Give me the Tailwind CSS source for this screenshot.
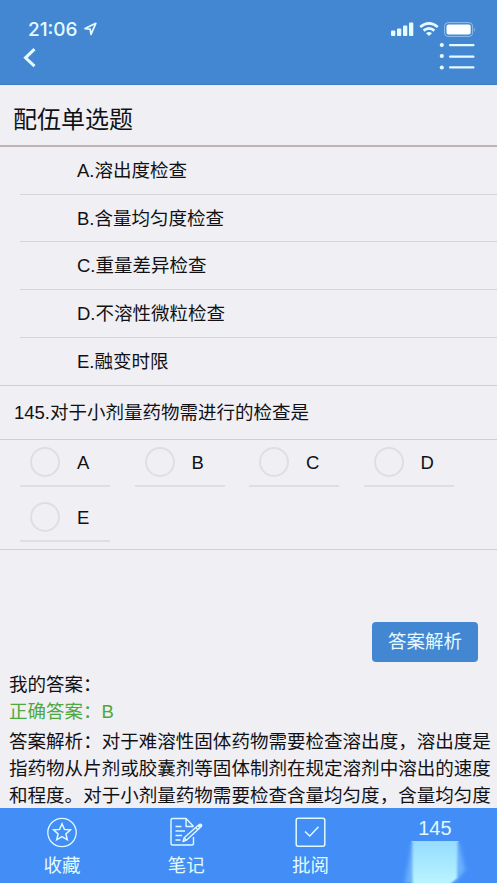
<!DOCTYPE html>
<html lang="zh-CN">
<head>
<meta charset="utf-8">
<title>配伍单选题</title>
<script src="https://cdn.jsdelivr.net/npm/@tailwindcss/browser@4"></script>
</head>
<body class="w-[497px] h-[883px] overflow-hidden bg-[#efeff4] text-[#111114] font-['Liberation_Sans','Noto_Sans_CJK_SC',sans-serif] text-[18.5px] leading-[27px]">
<div class="flex flex-col h-[883px]">
  <header class="h-[85px] shrink-0 bg-[#4387d3] text-[#e6fbff] border-b border-[#3b7bc6]">
    <div class="flex justify-between pt-[18px] pl-[28px] pr-[21px] h-[40px]">
      <div class="flex items-center gap-[5px] h-[22px]">
        <span class="font-['Inter','Liberation_Sans',sans-serif] text-[19px] font-medium w-[51px] whitespace-nowrap">21:06</span>
        <svg width="13" height="14" viewBox="0 0 13 14" fill="none" stroke="currentColor" stroke-width="1.7" stroke-linejoin="round"><path d="M1 6.600 11.800 1.300 7 12.400 6.200 7.200Z"/></svg>
      </div>
      <div class="flex items-center h-[22px]">
        <svg width="23" height="14" viewBox="0 0 23 14" fill="currentColor"><rect x="0" y="8.500" width="4.300" height="5.500" rx="1"/><rect x="6" y="6.500" width="4.300" height="7.500" rx="1"/><rect x="12" y="3.500" width="4.300" height="10.500" rx="1"/><rect x="18" y="0.500" width="4.300" height="13.500" rx="1"/></svg>
        <svg class="ml-[5px]" width="20" height="14" viewBox="0 0 20 14" fill="none" stroke="currentColor" stroke-width="2.700"><path d="M1.200 5Q10-2.200 18.800 5"/><path d="M4.600 8.600Q10 4.200 15.400 8.600"/><path d="M7 11.200Q10 8.800 13 11.200L10 14Z" fill="currentColor" stroke="none"/></svg>
        <svg class="ml-[5px]" width="32" height="15" viewBox="0 0 32 15"><rect x="0.600" y="0.600" width="28" height="13.800" rx="3.500" fill="none" stroke="#8fbfea"/><rect x="2.500" y="2.500" width="24.200" height="10" rx="2" fill="#fff"/><path d="M30.200 5.200Q32 7.500 30.200 9.800Z" fill="#8fbfea"/></svg>
      </div>
    </div>
    <div class="flex justify-between pl-[23px] pr-[22px]">
      <svg class="mt-[8px]" width="14" height="20" viewBox="0 0 14 20" fill="none" stroke="currentColor" stroke-width="3"><path d="M11.500 1.200 2.500 9.800 11.500 18.200"/></svg>
      <svg class="mt-[2px]" width="36" height="30" viewBox="0 0 36 30" fill="currentColor"><circle cx="2.800" cy="3" r="2.100"/><circle cx="2.800" cy="14" r="2.100"/><circle cx="2.800" cy="25.500" r="2.100"/><rect x="10" y="2" width="25.500" height="2.300" rx="1"/><rect x="10" y="13.500" width="25.500" height="2.300" rx="1"/><rect x="10" y="24.300" width="25.500" height="2.300" rx="1"/></svg>
    </div>
  </header>
  <main class="flex-1 min-h-0 overflow-hidden">
    <h1 class="h-[62px] border-b-2 border-[#bdb5b3] pl-[13px] pt-[17px] text-[24px] leading-[36px]">配伍单选题</h1>
    <ul class="pl-[20px]">
      <li class="h-[47.700px] border-b border-[#d5d5d9] pl-[57px] leading-[48px]">A.溶出度检查</li>
      <li class="h-[47.700px] border-b border-[#d5d5d9] pl-[57px] leading-[48px]">B.含量均匀度检查</li>
      <li class="h-[47.700px] border-b border-[#d5d5d9] pl-[57px] leading-[48px]">C.重量差异检查</li>
      <li class="h-[47.700px] border-b border-[#d5d5d9] pl-[57px] leading-[48px]">D.不溶性微粒检查</li>
      <li class="h-[47.200px] pl-[57px] leading-[48px]">E.融变时限</li>
    </ul>
    <p class="h-[55px] border-y border-[#d0d0d4] pl-[14px] leading-[54px]">145.对于小剂量药物需进行的检查是</p>
    <div class="h-[110px] border-b border-[#d0d0d4] pl-[20px] grid grid-cols-[repeat(4,114.500px)] grid-rows-[47px_55px] items-end">
      <label class="w-[90px] h-[47px] border-b-2 border-[#dedee3] flex items-center gap-[17px] pl-[10px]"><i class="size-[30px] rounded-full border-2 border-[#dedee3]"></i>A</label>
      <label class="w-[90px] h-[47px] border-b-2 border-[#dedee3] flex items-center gap-[17px] pl-[10px]"><i class="size-[30px] rounded-full border-2 border-[#dedee3]"></i>B</label>
      <label class="w-[90px] h-[47px] border-b-2 border-[#dedee3] flex items-center gap-[17px] pl-[10px]"><i class="size-[30px] rounded-full border-2 border-[#dedee3]"></i>C</label>
      <label class="w-[90px] h-[47px] border-b-2 border-[#dedee3] flex items-center gap-[17px] pl-[10px]"><i class="size-[30px] rounded-full border-2 border-[#dedee3]"></i>D</label>
      <label class="w-[90px] h-[47px] border-b-2 border-[#dedee3] flex items-center gap-[17px] pl-[10px]"><i class="size-[30px] rounded-full border-2 border-[#dedee3]"></i>E</label>
    </div>
    <div class="flex justify-end pt-[72px] pr-[19px]">
      <button class="w-[106px] h-[40px] rounded-[4px] bg-[#4387d3] text-[#e6fbff]">答案解析</button>
    </div>
    <div class="pl-[9px] pt-[9px]">
      <p>我的答案：</p>
      <p class="text-[#4fa83d]">正确答案：B</p>
      <p class="mt-[3px] whitespace-nowrap text-[18.540px]">答案解析：对于难溶性固体药物需要检查溶出度，溶出度是<br>指药物从片剂或胶囊剂等固体制剂在规定溶剂中溶出的速度<br>和程度。对于小剂量药物需要检查含量均匀度，含量均匀度</p>
    </div>
  </main>
  <nav class="h-[75px] shrink-0 grid grid-cols-4 bg-[#438df7] text-[#e0fbff] text-center">
    <div class="flex flex-col items-center pt-[9px]">
      <svg width="32" height="31" viewBox="0 0 32 31" fill="none" stroke="currentColor" stroke-width="1.300"><circle cx="16" cy="15.500" r="14.200"/><path stroke-width="1.500" d="M16 6.800 18.400 12.400 24.400 12.900 19.900 16.900 21.300 22.800 16 19.700 10.700 22.800 12.100 16.900 7.600 12.900 13.600 12.400Z"/></svg>
      <span class="mt-[4px]">收藏</span>
    </div>
    <div class="flex flex-col items-center pt-[9px]">
      <svg width="34" height="31" viewBox="0 0 34 31" fill="none" stroke="currentColor" stroke-width="1.400" stroke-linejoin="round"><path d="M24.500 9.500 17 1.500H3.500Q2 1.500 2 3V26.500Q2 28 3.500 28H23Q24.500 28 24.500 26.500V20"/><path d="M17 1.500V9.500H24.500M6.500 9.500H12.500M6.500 14H16M6.500 18.500H13M6.500 23H11.500"/><path d="M14 24.500 15.200 20.800 29 8.600 31 10.800 17.400 23.200ZM15.200 20.800 17.400 23.200M26.800 10.500 28.800 12.700"/><circle cx="31.200" cy="8.600" r="1.500" fill="currentColor"/></svg>
      <span class="mt-[4px]">笔记</span>
    </div>
    <div class="flex flex-col items-center pt-[9px]">
      <svg width="31" height="31" viewBox="0 0 31 31" fill="none" stroke="currentColor" stroke-width="1.500"><rect x="1.200" y="1.200" width="28.600" height="28" rx="2"/><path d="M10 14.500 14.800 19 23.500 9.800"/></svg>
      <span class="mt-[4px]">批阅</span>
    </div>
    <div class="flex flex-col items-center pt-[7px]">
      <span class="text-[20px] leading-[26px]">145</span>
      <svg width="124" height="42" viewBox="0 0 124 42">
        <defs>
          <linearGradient id="beam" x2="0" y2="1"><stop stop-color="#96dcff"/><stop offset="1" stop-color="#b9f4ff"/></linearGradient>
          <filter id="glow" x="-40%" width="180%" y="-10%" height="120%"><feGaussianBlur stdDeviation="2 1"/></filter>
          <filter id="soft" x="-20%" width="140%" y="0" height="100%"><feGaussianBlur stdDeviation="1.2 0"/></filter>
        </defs>
        <path d="M39 2H86L92 29 82 42H32Z" fill="#8dcfff" opacity=".55" filter="url(#glow)"/>
        <path d="M39.500 0.500H84.500L84 37 78 42H39.500Z" fill="url(#beam)" filter="url(#soft)"/>
        <path d="M38.500 0.800H85.500" stroke="#a9e6ff"/>
      </svg>
    </div>
  </nav>
</div>
</body>
</html>
